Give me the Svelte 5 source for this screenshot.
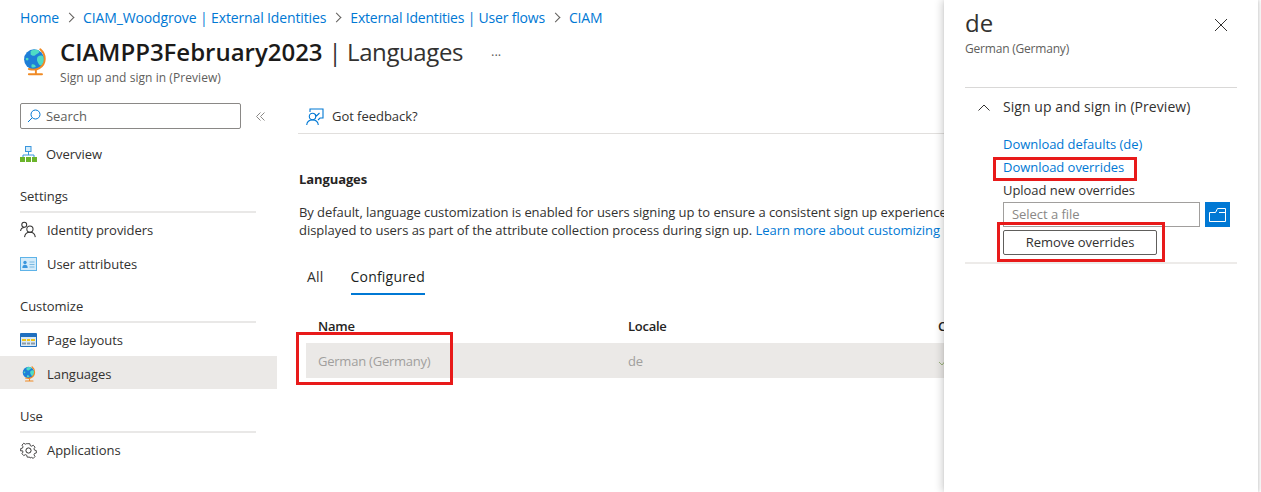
<script>
  const groups = [
    { title: 'Settings', items: [{ label: 'Identity providers', icon: 'idp' }, { label: 'User attributes', icon: 'card' }] },
    { title: 'Customize', items: [{ label: 'Page layouts', icon: 'table' }, { label: 'Languages', icon: 'globe', active: true }] },
    { title: 'Use', items: [{ label: 'Applications', icon: 'gear' }] }
  ];
</script>

{#snippet globe(size)}
  <svg width={size} height={size} viewBox="0 0 28 32" aria-hidden="true">
    <circle cx="13" cy="13" r="11.5" fill="#1e7fd8" />
    <path d="M9 3.5c3-2 8-2 10 0 1 2-3 3-5 5-2 1-4 0-5-1zM17 10c3-2 6-2 7 1 1 4-1 7-3 9-2 0-3-2-4-4-1-2-1-4 0-6zM5 11a1.6 1.6 0 1 0 .01 0zM10 19c2-1 4 0 5 2-1 1-3 2-5 1z" fill="#4fdcc4" />
    <path d="M20 1.5c7 6 7 17-1 21.500-3 2-8 2-12 1" fill="none" stroke="#f08a24" stroke-width="2.200" stroke-linecap="round" />
    <path d="M15 25v4M7 30h15" fill="none" stroke="#f08a24" stroke-width="2.200" stroke-linecap="round" />
  </svg>
{/snippet}

{#snippet navIcon(name)}
  {#if name === 'idp'}
    <svg width="18" height="18" viewBox="0 0 18 18" fill="none" stroke="#323130" stroke-width="1.100" aria-hidden="true">
      <circle cx="4.500" cy="3.500" r="2.600" /><path d="M.6 10c.3-2.400 1.800-3.700 4-3.700" />
      <circle cx="10.500" cy="8" r="3.300" /><path d="M4.800 16.500c.4-3.200 2.600-5.200 5.700-5.200s5.300 2 5.700 5.200" />
    </svg>
  {:else if name === 'card'}
    <svg width="17" height="14" viewBox="0 0 17 14" aria-hidden="true">
      <rect x=".5" y=".5" width="16" height="13" fill="#d3ebfa" stroke="#5eb3e8" />
      <circle cx="5" cy="5.500" r="1.700" fill="#3a96dd" /><path d="M2.300 11c0-2.200 1.100-3.200 2.700-3.200s2.700 1 2.700 3.200z" fill="#3a96dd" />
      <path d="M9.500 5h5M9.500 7.500h5M9.500 10h5" stroke="#7ab8e0" />
    </svg>
  {:else if name === 'table'}
    <svg width="17" height="14" viewBox="0 0 17 14" aria-hidden="true">
      <rect width="17" height="14" rx="1" fill="#1f6fbf" />
      <rect x="1" y="4" width="15" height="9" fill="#d9e9f5" />
      <path d="M2 6h4v2H2zM7 6h3v2H7zM11 6h4v2h-4z" fill="#f0c419" /><path d="M2 9.500h4v2H2zM7 9.500h3v2H7zM11 9.500h4v2h-4z" fill="#8c9ba8" />
    </svg>
  {:else if name === 'globe'}
    {@render globe(16)}
  {:else if name === 'gear'}
    <svg width="17" height="17" viewBox="0 0 17 17" fill="none" stroke="#323130" stroke-width="1" aria-hidden="true">
      <path d="M7 1h3l.5 2.200 1.500.7 2-1.100 2 2.200-1.200 1.900.6 1.500 2.100.6v2.700l-2.100.6-.6 1.500 1.200 1.900-2 2.200-2-1.100-1.500.7L10 16.500H7l-.5-2.200-1.500-.7-2 1.100-2-2.200 1.200-1.900-.6-1.500L-.5 9.400V6.700l2.100-.6.600-1.500L1 2.700l2-2.200 2 1.100 1.500-.7z" transform="translate(1.100 .8) scale(.87)" />
      <circle cx="8.500" cy="8.500" r="2.600" />
    </svg>
  {/if}
{/snippet}

<div class="page">
  <nav class="crumbs">
    <a href="#a">Home</a><span class="sep"></span>
    <a href="#a">CIAM_Woodgrove | External Identities</a><span class="sep"></span>
    <a href="#a" class="tight">External Identities | User flows</a><span class="sep"></span>
    <a href="#a">CIAM</a>
  </nav>

  <header class="head">
    <span class="head-icon">{@render globe(28)}</span>
    <div>
      <div class="title-line">
        <h1><b>CIAMPP3February2023</b> | Languages</h1>
        <span class="more">···</span>
      </div>
      <div class="sub">Sign up and sign in (Preview)</div>
    </div>
  </header>

  <div class="body">
    <aside class="side">
      <div class="search-row">
        <div class="search">
          <svg width="14" height="14" viewBox="0 0 14 14" fill="none" stroke="#0078d4" aria-hidden="true"><circle cx="8.500" cy="5.500" r="4.500" /><path d="M5.200 8.800 1 13" /></svg>
          <span>Search</span>
        </div>
        <svg class="collapse" width="9" height="9" viewBox="0 0 9 9" fill="none" stroke="#8a8886" aria-hidden="true"><path d="M4.500.5.500 4.500l4 4M8.500.5l-4 4 4 4" /></svg>
      </div>
      <a class="item first" href="#a">
        <span class="ic">
          <svg width="17" height="16" viewBox="0 0 17 16" aria-hidden="true">
            <rect x="5.500" y=".5" width="5.500" height="5" fill="#d3ebfa" stroke="#3a96dd" />
            <path d="M8.500 6v3M3 11V9h11v2" fill="none" stroke="#3a96dd" />
            <rect x="0" y="11" width="5" height="5" fill="#6bb42b" /><rect x="6" y="11" width="5" height="5" fill="#6bb42b" /><rect x="12" y="11" width="5" height="5" fill="#6bb42b" />
          </svg>
        </span>Overview
      </a>
      {#each groups as g}
        <div class="group-title">{g.title}</div>
        {#each g.items as it}
          <a class="item" class:active={it.active} href="#a"><span class="ic">{@render navIcon(it.icon)}</span>{it.label}</a>
        {/each}
      {/each}
    </aside>

    <main class="main">
      <div class="toolbar">
        <svg width="18" height="18" viewBox="0 0 18 18" fill="none" stroke="#0078d4" stroke-width="1.100" aria-hidden="true">
          <path d="M4 4V1h13v9h-3l-2 2M9 6.500l1.500 1.500 3-3" /><circle cx="6.500" cy="8.500" r="3.200" /><path d="M.7 17c.3-3.200 2.600-5 5.800-5s5.500 1.800 5.800 5" />
        </svg>
        <span>Got feedback?</span>
      </div>
      <h2>Languages</h2>
      <p class="para">By default, language customization is enabled for users signing up to ensure a consistent sign up experience<br />displayed to users as part of the attribute collection process during sign up. <a href="#a">Learn more about customizing</a></p>
      <div class="tabs">
        <span class="tab">All</span>
        <span class="tab on">Configured</span>
      </div>
      <div class="thead"><span>Name</span><span>Locale</span><span>Configured</span></div>
      <div class="trow">
        <span class="namecell">German (Germany)<i class="mark mark-name"></i></span>
        <span>de</span>
        <span><svg width="10" height="8" viewBox="0 0 10 8" fill="none" stroke="#9bb37a" aria-hidden="true"><path d="M1 4l3 3 5-6" /></svg></span>
      </div>
    </main>
  </div>

  <section class="panel">
    <div class="panel-head">
      <div>
        <div class="code">de</div>
        <div class="panel-sub">German (Germany)</div>
      </div>
      <svg class="close" width="14" height="14" viewBox="0 0 14 14" stroke="#323130" aria-hidden="true"><path d="M1 1l12 12M13 1 1 13" /></svg>
    </div>
    <div class="acc">
      <div class="acc-title">
        <svg width="12" height="7" viewBox="0 0 12 7" fill="none" stroke="#323130" aria-hidden="true"><path d="M.5 6.500 6 1l5.500 5.500" /></svg>
        <span>Sign up and sign in (Preview)</span>
      </div>
      <div class="acc-body">
        <a href="#a">Download defaults (de)</a>
        <a href="#a" class="marked">Download overrides<i class="mark mark-link"></i></a>
        <span>Upload new overrides</span>
        <div class="file">
          <div class="file-input">Select a file</div>
          <div class="file-btn">
            <svg width="17" height="14" viewBox="0 0 17 14" fill="none" stroke="#fff" aria-hidden="true"><path d="M.5 4.500v9h16V.5H8.500l-2 4zM10 4.500h6.500" /></svg>
          </div>
        </div>
        <div class="remove">Remove overrides<i class="mark mark-btn"></i></div>
      </div>
    </div>
  </section>
</div>

<style>
  :global(body) { margin: 0; background: #fff; }
  .page {
    position: relative;
    width: 1261px;
    height: 492px;
    overflow: hidden;
    font-family: "Open Sans", "Noto Sans", sans-serif;
    font-size: 13px;
    letter-spacing: -.04px;
    color: #323130;
  }
  a { color: inherit; text-decoration: none; }
  .crumbs { display: flex; align-items: center; height: 18px; padding: 8px 0 0 20px; color: #0078d4; font-size: 14px; letter-spacing: -.13px; }
  .crumbs a { color: #0078d4; }
  .crumbs a.tight { letter-spacing: -.2px; }
  .sep { width: 6px; height: 6px; margin: 0 10px 0 7px; border-top: 1px solid #605e5c; border-right: 1px solid #605e5c; transform: rotate(45deg); }
  .head { display: flex; gap: 11px; padding: 10px 0 0 21px; height: 60px; box-sizing: border-box; }
  .head-icon { padding-top: 12px; }
  .title-line { display: flex; align-items: center; height: 30px; }
  h1 { margin: 0; font-size: 24px; font-weight: 400; letter-spacing: -.4px; white-space: nowrap; color: #323130; }
  h1 b { font-weight: 600; color: #1b1a19; letter-spacing: -.02px; }
  .more { margin: 8px 0 0 28px; font-size: 13px; letter-spacing: 0; color: #605e5c; }
  .sub { font-size: 12px; line-height: 16px; margin-top: 4px; color: #605e5c; letter-spacing: .06px; }
  .body { display: flex; padding-top: 17px; }
  .side { width: 277px; flex: none; }
  .search-row { display: flex; align-items: center; padding-left: 20px; height: 26px; }
  .search { display: flex; align-items: center; gap: 5px; box-sizing: border-box; width: 221px; height: 26px; padding-left: 6px; border: 1px solid #8a8886; border-radius: 2px; color: #605e5c; }
  .collapse { margin-left: 15px; }
  .item { display: flex; align-items: center; box-sizing: border-box; height: 34px; padding-left: 20px; color: #323130; white-space: nowrap; }
  .item.first { margin: 7px 0 8px; padding-top: 2px; }
  .item.first .ic { margin-right: 9px; }
  .item.active { height: 33px; margin: -1px 0 9px; padding-top: 2px; background: #ebe9e7; }
  .ic { display: flex; justify-content: center; width: 17px; margin-right: 10px; }
  .group-title { box-sizing: border-box; width: 236px; margin: 7px 0 0 20px; height: 35px; padding-top: 9px; line-height: 18px; border-bottom: 2px solid #e9e8e7; color: #323130; font-weight: 500; }
  .main { flex: none; width: 667px; box-sizing: border-box; overflow: hidden; padding: 0 0 0 21px; }
  .toolbar { display: flex; align-items: center; gap: 8px; box-sizing: border-box; height: 35px; margin-top: -4px; padding-left: 8px; border-bottom: 1px solid #e1dfdd; color: #323130; }
  .toolbar svg { margin-top: 1px; }
  h2 { margin: 36px 0 0 1px; font-size: 13px; line-height: 18px; font-weight: 700; letter-spacing: -.1px; color: #252423; }
  .para { margin: 15px 0 0 1px; line-height: 18px; white-space: nowrap; letter-spacing: -.03px; color: #323130; }
  .para::first-line { letter-spacing: -.06px; }
  .para a { color: #0078d4; }
  .tabs { display: flex; gap: 27px; margin: 22px 0 0 9px; height: 58px; letter-spacing: .2px; }
  .tab { padding: 6px 0 0; font-size: 14px; line-height: 20px; box-sizing: border-box; height: 34px; color: #323130; }
  .tab.on { border-bottom: 2px solid #0078d4; font-weight: 500; color: #201f1e; }
  .thead, .trow { display: grid; grid-template-columns: 310px 310px 1fr; padding-left: 12px; margin-left: 8px; white-space: nowrap; }
  .thead { height: 26px; line-height: 18px; font-weight: 600; margin-top: -2px; letter-spacing: -.25px; color: #252423; }
  .trow { align-items: center; box-sizing: border-box; height: 35px; padding-top: 1px; background: #ebe9e7; color: #a19f9d; letter-spacing: -.23px; }
  .namecell { position: relative; }
  .panel { position: absolute; top: 0; left: 944px; width: 314px; height: 492px; box-sizing: border-box; background: #fff; box-shadow: -2px 0 8px rgba(0,0,0,.18), 1px 0 3px rgba(0,0,0,.14); }
  .panel-head { display: flex; justify-content: space-between; height: 88px; box-sizing: border-box; margin: 0 21px; border-bottom: 1px solid #d9d8d7; padding-top: 6px; }
  .code { font-size: 24px; line-height: 33px; font-weight: 500; letter-spacing: 0; color: #323130; }
  .panel-sub { font-size: 12px; line-height: 16px; color: #605e5c; margin-top: 2px; letter-spacing: -.2px; }
  .close { margin: 12px 9px 0 0; }
  .acc { margin: 0 21px; height: 176px; box-sizing: border-box; border-bottom: 2px solid #edebe9; }
  .acc-title { display: flex; align-items: center; gap: 13px; height: 37px; padding-left: 13px; font-size: 14px; letter-spacing: .06px; color: #323130; }
  .acc-title svg { margin-top: 1px; }
  .acc-body { display: flex; flex-direction: column; align-items: flex-start; padding: 8px 0 0 38px; }
  .acc-body a, .acc-body > span { height: 23px; line-height: 23px; }
  .acc-body a { color: #0078d4; }
  .marked, .remove { position: relative; }
  .file { display: flex; gap: 5px; height: 26px; }
  .file-input { box-sizing: border-box; width: 197px; height: 25px; border: 1px solid #a19f9d; padding-left: 8px; line-height: 23px; color: #8a8886; }
  .file-btn { display: flex; align-items: center; justify-content: center; width: 25px; height: 25px; background: #0078d4; }
  .remove { box-sizing: border-box; width: 154px; height: 25px; margin-top: 2px; border: 1px solid #605e5c; border-radius: 2px; text-align: center; line-height: 23px; font-weight: 500; color: #323130; }
  .mark { position: absolute; box-sizing: border-box; border: 3px solid #e81a1a; pointer-events: none; }
  .mark-name { left: -22px; top: -20px; width: 157px; height: 53px; }
  .mark-link { left: -10px; top: 1px; width: 144px; height: 24px; }
  .mark-btn { left: -7px; top: -9px; width: 168px; height: 40px; }
</style>
